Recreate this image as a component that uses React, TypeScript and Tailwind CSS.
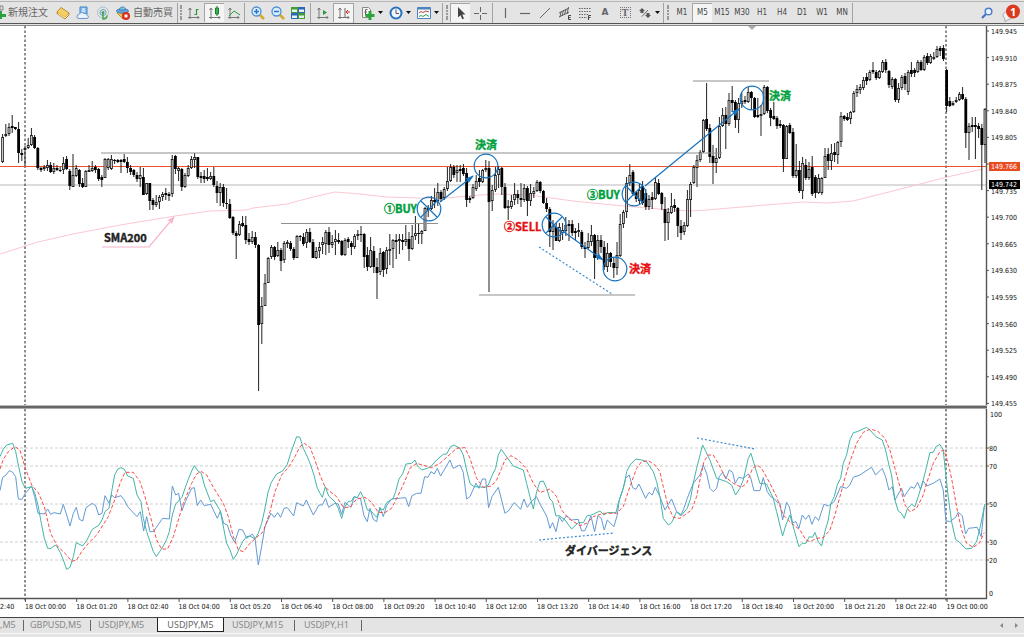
import type { ReactNode } from 'react'

// One entry per five-minute bar: direction, then high, body top, body bottom, low as chart y values
const BARS = `
u134,137,162,163 u124,134,136,137 u123,127,134,136 d115,126,128,133 d127,127,129,130 d122,129,153,163 d149,153,155,161 u146,148,150,166
u138,145,148,149 u128,135,145,146 d135,137,148,149 d147,148,168,170 d167,168,170,172 u165,167,169,171 u160,165,168,171 d162,165,172,173
u163,168,172,174 d165,168,170,171 d167,170,171,172 u157,163,170,174 d156,159,169,170 d169,171,186,190 u154,175,187,187 u165,168,176,177
d169,170,184,187 d178,183,187,188 u170,171,187,187 u165,170,172,172 u161,168,171,172 d165,167,170,173 d168,169,179,181 d175,177,180,187
u158,159,178,178 u158,159,168,170 u155,159,169,170 d159,160,161,164 d159,160,162,163 d159,160,162,173 d154,159,162,163 d157,162,168,173
d165,168,172,175 d169,170,175,177 d172,175,179,182 u167,175,179,187 d168,177,195,195 u183,183,194,195 d183,183,201,210 d198,200,205,210
u195,202,205,207 u195,197,202,209 u192,194,197,201 d188,193,195,200 d192,194,196,201 u155,159,194,197 d155,156,169,174 u167,168,171,181
d168,169,187,191 u173,175,187,188 u165,168,176,177 u156,159,168,169 u153,157,160,168 d157,157,177,179 d172,176,178,183 d170,176,179,183
d168,177,179,181 u172,176,179,180 d167,176,185,187 d181,186,193,203 u183,187,193,206 d184,187,203,207 d188,203,204,209 d199,204,218,219
d216,217,233,235 d231,233,236,259 u221,224,235,236 d216,223,226,227 d216,225,240,244 d233,239,242,245 u231,237,242,244 d232,237,245,248
d244,245,325,391 u297,306,324,344 u274,283,306,306 u257,258,283,283 u245,247,257,259 d246,247,257,260 u242,250,256,257 d248,250,261,271
u241,243,260,263 u240,242,244,248 d241,243,249,251 d247,249,258,260 u235,236,258,258 d235,236,237,241 d233,237,244,246 u229,232,243,248
d228,232,242,243 d239,242,258,258 u247,251,258,259 u242,247,251,258 u237,242,245,254 u230,232,244,255 d227,232,245,253 u235,242,245,248
u230,239,242,255 d233,240,242,244 d240,241,255,256 u238,240,255,256 d237,239,242,248 d241,243,247,255 u234,236,247,249 u230,234,236,240
d226,234,235,242 d233,234,257,268 d247,255,267,271 u237,250,267,268 d246,251,267,273 d258,267,273,299 u248,253,272,275 d251,252,270,277
u247,250,269,274 u234,249,251,265 u239,240,249,268 d234,240,242,259 u234,239,241,254 d234,240,242,250 u225,239,242,246 d232,239,249,261
u225,236,249,250 u216,233,236,240 d224,233,234,244 u230,231,234,244 u207,208,231,231 d205,208,210,217 u196,200,209,210 d188,200,202,208
u183,192,201,206 d190,192,199,202 u187,189,198,200 u167,181,189,191 u164,167,181,182 d165,167,175,178 u165,170,173,182 d165,169,171,182
d164,168,174,176 d168,173,200,207 d196,198,200,203 u184,187,198,199 u175,181,189,191 d170,178,182,187 u169,170,182,183 u160,168,170,172
d161,168,202,292 u185,190,201,211 u167,175,190,192 u166,169,175,188 d167,168,187,195 d183,187,208,209 u200,206,208,220 u195,201,207,209
u183,194,200,205 d190,194,198,204 d183,198,200,207 u184,188,200,202 d186,188,201,216 u184,193,201,206 u187,191,194,198 u180,182,191,192
d181,182,191,193 d190,191,203,204 d198,203,209,212 d207,209,232,247 u220,226,232,250 d223,227,241,241 u223,227,241,242 u223,230,233,240
u217,225,231,236 d220,224,226,241 d220,224,233,236 d228,231,233,240 u223,230,232,237 d230,232,247,249 d242,247,249,258 u233,241,248,249
u225,235,242,246 d234,235,258,279 u235,240,258,260 d235,240,247,253 d241,247,267,270 u243,253,267,272 d252,253,262,267 d257,263,268,278
u242,255,268,275 u214,224,256,257 u210,212,224,228 u177,183,212,218 u164,175,183,186 d170,172,194,196 d191,192,199,202 u184,190,201,204
d181,186,203,205 d189,193,207,210 u195,199,207,210 d192,197,200,209 u178,182,199,200 d179,183,194,195 d192,193,204,210 d197,209,223,241
u208,212,223,240 u193,206,213,214 d199,205,208,212 d207,208,226,237 d220,226,233,240 u222,225,232,235 u190,199,226,227 u182,184,200,217
u165,167,183,184 u155,160,168,187 u150,152,160,162 u119,120,152,153 d83,119,129,131 d124,128,157,163 d145,156,163,184 u148,158,163,173
u117,126,158,159 u108,115,126,127 d107,115,124,149 u93,100,124,126 d86,100,103,112 d100,102,120,128 u98,103,120,133 u92,101,104,108
d96,100,102,104 u87,92,102,103 d91,92,98,110 d97,98,117,118 d98,115,117,118 u105,114,116,136 u85,87,114,115 d86,87,111,113
d108,110,118,126 d102,116,119,120 d116,118,126,129 d120,124,126,128 d124,125,159,172 u125,126,159,159 d123,125,133,134 d128,132,176,178
u144,170,176,178 d161,170,191,193 u157,163,191,199 d159,165,178,180 u162,169,178,180 d156,167,194,196 d175,177,193,198 u174,178,193,194
u177,178,193,195 u148,156,178,178 d148,154,161,170 u144,153,161,170 d143,152,155,162 u141,142,155,164 u112,116,142,147 d115,116,119,121
d113,117,120,121 u111,112,119,124 u91,93,112,113 u85,89,93,97 u84,87,90,94 u77,80,88,90 d73,77,81,85 u70,72,80,81
d62,70,72,74 d70,72,78,80 u70,71,78,79 u60,62,72,73 d59,62,70,73 d70,71,85,88 u77,79,87,89 d78,79,100,102
u83,88,100,103 u75,77,88,90 d73,76,84,90 u70,72,92,95 d62,70,74,77 d68,70,73,77 u60,62,72,73 d60,62,70,71
u55,57,70,71 d53,56,63,65 u54,56,63,64 u52,57,59,60 u46,49,57,58 d46,48,51,56 d45,48,59,61 d69,70,106,112
d97,101,106,107 u101,103,105,106 u97,100,102,103 u92,94,100,101 d87,94,99,100 d97,99,133,148 u123,126,133,160 d117,125,127,132
d117,125,127,159 d123,126,129,138 d124,128,145,190 u108,109,145,163
`
  .trim()
  .split(/\s+/)
  .map(bar => {
    const [high, top, bottom, low] = bar.slice(1).split(',').map(Number)
    return { up: bar[0] === 'u', high, top, bottom, low }
  })

const SMA =
  '0,254 38,242 73,234 120,225 175,216 210,211 246,210 253,208 287,204 313,197 335,192 360,194 387,197 417,198 447,198 480,195 497,194 530,195 573,201 623,206 660,209 690,211 707,210 753,206 803,202 827,203 853,201 893,191 947,177 983,169'

// Oscillator lines, three units to the pixel, y from the 400 line
const STOCH_MAIN =
  '0,170 10,147 20,135 38,130 47,155 56,200 66,245 76,265 95,260 104,278 114,315 124,370 133,415 143,445 153,445 165,436 171,440 181,458 190,480 200,508 210,502 220,470 229,428 248,438 260,422 277,388 296,376 306,360 315,335 327,325 335,275 344,225 354,207 363,203 373,208 383,228 400,235 411,285 423,305 430,355 440,395 450,425 460,455 469,470 479,455 490,438 500,418 508,395 517,345 527,312 546,292 556,262 565,238 575,213 583,197 594,213 604,220 613,255 632,305 642,300 652,318 661,332 671,385 680,430 690,450 700,478 709,465 728,425 740,410 750,408 765,417 775,400 785,370 794,330 804,278 814,247 830,222 848,213 862,193 872,160 890,110 900,112 910,145 922,170 932,195 942,225 952,265 967,292 976,260 986,288 1005,305 1015,325 1025,355 1035,320 1045,305 1055,303 1062,290 1072,293 1082,275 1092,297 1102,330 1112,332 1130,352 1140,325 1150,330 1160,308 1180,295 1187,275 1197,237 1208,222 1218,192 1235,190 1245,180 1253,198 1265,210 1282,205 1292,200 1310,180 1330,163 1340,162 1352,140 1362,135 1380,145 1390,165 1400,210 1410,250 1422,260 1455,262 1465,255 1477,225 1487,205 1495,165 1504,148 1540,198 1570,210 1580,250 1590,290 1600,327 1610,275 1620,245 1630,243 1640,265 1650,297 1658,305 1668,348 1678,347 1695,360 1715,387 1735,368 1750,368 1762,347 1775,345 1800,333 1812,345 1822,338 1848,338 1855,310 1865,280 1875,245 1880,215 1890,195 1908,177 1925,180 1940,185 1960,215 1970,245 1980,290 1990,355 2005,375 2015,368 2030,335 2045,345 2062,325 2072,295 2080,250 2090,205 2108,135 2118,155 2130,180 2150,235 2180,245 2195,255 2207,285 2220,265 2230,240 2245,175 2253,160 2262,190 2280,250 2300,252 2320,295 2330,335 2348,408 2358,375 2370,345 2380,380 2397,440 2407,430 2418,430 2428,410 2438,412 2445,397 2455,425 2465,438 2475,395 2485,360 2493,310 2503,290 2512,255 2522,235 2530,190 2540,165 2550,120 2560,98 2572,95 2600,82 2610,90 2628,110 2647,120 2657,150 2667,195 2675,225 2685,300 2695,333 2705,340 2713,355 2723,325 2735,313 2745,320 2755,290 2770,240 2780,200 2790,158 2800,157 2808,140 2820,133 2830,150 2836,210 2845,290 2855,365 2867,418 2880,428 2898,447 2915,445 2930,425 2940,385 2955,312'
const STOCH_SIGNAL =
  '0,207 10,178 25,155 45,140 60,150 76,205 95,255 115,278 133,320 152,400 171,437 200,465 215,484 230,480 245,455 265,430 290,405 325,350 344,300 360,250 375,217 400,217 420,245 435,290 450,345 470,420 485,447 503,447 520,410 535,360 550,310 575,250 590,222 603,214 620,225 640,262 670,310 685,350 700,410 715,450 730,455 750,430 770,412 790,395 810,335 825,275 845,225 865,203 885,170 900,140 913,130 930,142 945,180 960,225 975,260 990,275 1010,290 1030,322 1050,322 1070,297 1095,292 1115,307 1135,337 1155,338 1175,325 1195,285 1215,243 1230,205 1250,190 1295,203 1320,190 1350,163 1370,145 1395,143 1410,175 1430,235 1450,262 1475,258 1490,240 1505,205 1515,180 1533,167 1555,180 1580,207 1600,250 1620,278 1650,267 1670,290 1685,330 1705,355 1740,377 1760,370 1780,350 1810,340 1850,340 1870,320 1890,260 1910,205 1925,185 1945,182 1965,195 1980,215 1990,260 2005,320 2020,352 2040,355 2075,330 2090,290 2100,240 2112,185 2125,165 2140,165 2155,190 2175,230 2200,250 2225,262 2240,250 2258,205 2272,195 2285,205 2310,250 2330,290 2350,345 2375,370 2400,390 2418,420 2430,425 2450,415 2470,413 2490,390 2505,345 2520,290 2535,235 2550,185 2570,130 2590,97 2612,87 2635,95 2655,115 2670,150 2685,205 2700,260 2715,315 2730,335 2750,325 2770,285 2785,235 2800,190 2820,155 2832,150 2845,190 2855,235 2870,320 2885,390 2900,430 2920,442 2938,430 2953,398'
const RSI =
  '0,272 8,232 18,225 28,212 38,217 47,230 55,297 66,298 76,280 95,258 104,290 114,340 133,342 143,327 152,343 162,338 181,342 190,313 200,345 210,378 220,340 229,322 238,358 248,363 258,323 277,310 287,317 296,345 306,340 315,287 327,310 335,285 344,293 363,287 373,300 383,320 411,350 421,335 431,393 440,350 450,395 460,395 488,355 508,357 517,258 527,285 536,280 546,332 556,305 575,265 583,263 592,317 602,300 613,317 632,313 652,355 661,333 671,370 682,375 692,405 704,427 717,388 728,390 740,415 757,402 765,415 775,495 785,440 795,380 813,340 823,352 833,338 842,352 852,325 862,323 881,348 890,308 910,318 919,300 940,345 957,315 967,315 977,295 986,322 1005,310 1015,312 1025,343 1035,307 1053,322 1063,290 1082,297 1092,347 1102,365 1110,325 1120,358 1130,365 1140,322 1150,350 1160,317 1175,297 1217,293 1226,320 1236,287 1250,280 1263,280 1274,230 1284,232 1293,215 1303,222 1312,205 1322,228 1350,180 1360,205 1380,195 1390,217 1400,297 1410,290 1428,250 1437,265 1447,237 1457,237 1466,323 1476,290 1495,262 1505,300 1515,340 1525,333 1543,308 1562,328 1572,297 1582,322 1592,307 1610,290 1620,312 1640,348 1650,385 1658,368 1668,395 1678,350 1687,365 1700,347 1715,360 1735,358 1745,393 1755,392 1773,348 1784,395 1794,347 1804,355 1813,390 1822,360 1842,380 1852,345 1858,300 1870,265 1877,235 1888,225 1898,263 1908,268 1917,252 1937,295 1947,277 1957,285 1966,262 1980,290 1995,330 2015,297 2030,335 2042,348 2052,325 2062,295 2080,250 2100,225 2110,195 2120,220 2130,265 2140,275 2150,265 2158,230 2168,217 2178,237 2188,210 2198,217 2206,250 2216,232 2230,235 2245,222 2252,232 2262,272 2280,272 2290,233 2302,275 2312,290 2322,295 2332,307 2340,310 2348,360 2360,307 2368,320 2378,368 2388,365 2397,385 2407,345 2417,358 2427,345 2436,373 2446,350 2456,362 2472,313 2485,318 2503,305 2522,260 2540,265 2550,255 2560,232 2580,225 2598,213 2615,202 2627,225 2647,205 2657,230 2667,270 2677,260 2685,300 2705,265 2713,290 2733,260 2743,265 2753,247 2762,268 2770,243 2780,258 2800,250 2820,237 2830,270 2838,362 2850,365 2867,352 2875,337 2887,347 2897,402 2906,385 2932,382 2944,410 2953,320'

const PRICES = [
  '149.945', '149.910', '149.875', '149.840', '149.805', '149.770', '149.735', '149.700',
  '149.665', '149.630', '149.595', '149.560', '149.525', '149.490', '149.455',
]

const TIMES = [
  '18 Oct 00:00', '18 Oct 01:20', '18 Oct 02:40', '18 Oct 04:00', '18 Oct 05:20', '18 Oct 06:40', '18 Oct 08:00',
  '18 Oct 09:20', '18 Oct 10:40', '18 Oct 12:00', '18 Oct 13:20', '18 Oct 14:40', '18 Oct 16:00', '18 Oct 17:20',
  '18 Oct 18:40', '18 Oct 20:00', '18 Oct 21:20', '18 Oct 22:40', '19 Oct 00:00',
]

const LEVELS = [
  { value: 80, y: 448 },
  { value: 70, y: 466 },
  { value: 50, y: 504 },
  { value: 30, y: 542 },
  { value: 20, y: 560 },
]

const axisText = "font-['DejaVu_Sans_Condensed','DejaVu_Sans',sans-serif] text-[7px]"
const noteText = "font-['Noto_Sans_CJK_JP',sans-serif] text-[11px] font-bold"

function Candles() {
  return (
    <g>
      {BARS.map((bar, i) => {
        const x = 2.6 + i * 3.2
        const height = Math.max(bar.bottom - bar.top, 1)
        return (
          <g key={i}>
            <rect x={x - 0.5} y={bar.high} width={1} height={bar.low - bar.high} fill="#222" />
            <rect x={x - 1.4} y={bar.top} width={2.8} height={height} fill={bar.up ? '#222' : '#000'} />
            {bar.up && height > 2 && <rect x={x - 0.6} y={bar.top + 1} width={1.2} height={height - 2} fill="#c8c8c8" />}
          </g>
        )
      })}
    </g>
  )
}

interface MarkerProps {
  x: number
  y: number
  crossed?: boolean
}

function Marker({ x, y, crossed }: MarkerProps) {
  return (
    <g fill="none" stroke="#1673c0" strokeWidth={1.2}>
      <circle cx={x} cy={y} r={11.8} />
      {crossed && <path d={`M${x - 8} ${y - 8}l16 16M${x + 8} ${y - 8}l-16 16`} />}
    </g>
  )
}

function PriceChart() {
  return (
    <svg viewBox="0 26 1024 382" className="block w-full" role="img" aria-label="USDJPY M5">
      <defs>
        <marker id="blueArrow" viewBox="0 0 9 6" refX="8" refY="3" markerWidth="9" markerHeight="6" markerUnits="userSpaceOnUse" orient="auto">
          <path d="M0 0L9 3L0 6L1.500 3Z" fill="#1673c0" />
        </marker>
        <marker id="pinkArrow" viewBox="0 0 8 6" refX="7" refY="3" markerWidth="8" markerHeight="6" markerUnits="userSpaceOnUse" orient="auto">
          <path d="M0 0L8 3L0 6L1.500 3Z" fill="#f6b3cb" />
        </marker>
      </defs>

      <path d="M0 185H986" stroke="#d0d0d0" strokeWidth={1.4} />
      <polyline points={SMA} fill="none" stroke="#fbc8d1" strokeWidth={1} />
      <path d="M25 26V406M946 26V406" stroke="#444" strokeWidth={1.2} strokeDasharray="2.500 2" />
      <path d="M0 166.500H987" stroke="#f0512a" />
      <Candles />
      <path d="M101 153H722M281 223.500H438M479 295H635M693 81H769" stroke="#8f8f8f" strokeWidth={1.2} />
      <path d="M748 26h8l-4 4Z" fill="#aaa" />

      {/* trades */}
      <Marker x={429} y={209} crossed />
      <Marker x={486} y={166} />
      <Marker x={554} y={225} crossed />
      <Marker x={615} y={269} />
      <Marker x={634} y={194} crossed />
      <Marker x={752} y={98} />
      <g stroke="#1673c0" strokeWidth={1.2}>
        <path d="M440 202L473 176" markerEnd="url(#blueArrow)" />
        <path d="M564 232L603 260" markerEnd="url(#blueArrow)" />
        <path d="M645 186L739 109" markerEnd="url(#blueArrow)" />
      </g>
      <path d="M539 247L612 294" stroke="#3b8ad0" strokeWidth={1.2} strokeDasharray="2 2" />
      <path d="M102 247H149L174 217" fill="none" stroke="#f6b3cb" strokeWidth={1.2} markerEnd="url(#pinkArrow)" />
      <text x={104} y={242} className={noteText} fill="#222" stroke="#222" strokeWidth={0.4}>SMA200</text>
      <g className={noteText} fill="#00a040" stroke="#00a040" strokeWidth={0.4}>
        <text x={475} y={149}>決済</text>
        <text x={384} y={213}>①BUY</text>
        <text x={587} y={199}>③BUY</text>
        <text x={769} y={100}>決済</text>
      </g>
      <g className={noteText} fill="#e60f12" stroke="#e60f12" strokeWidth={0.4}>
        <text x={504} y={231}>②SELL</text>
        <text x={629} y={273}>決済</text>
      </g>

      {/* price scale */}
      <path d="M986.500 26V406" stroke="#555" strokeWidth={1.4} />
      {PRICES.map((price, i) => (
        <g key={price} className={axisText} fill="#111">
          <path d={`M987 ${31 + i * 26.6}h2`} stroke="#555" />
          <text x={991} y={34 + i * 26.6}>{price}</text>
        </g>
      ))}
      <rect x={989} y={162} width={31} height={9} fill="#ea4a1f" />
      <rect x={989} y={180} width={31} height={9} fill="#000" />
      <g className={axisText} fill="#fff">
        <text x={991} y={169}>149.766</text>
        <text x={991} y={187}>149.742</text>
      </g>
      <path d="M0 407H987" stroke="#666" strokeWidth={2} />
      <path d="M0 405.500H987" stroke="#bbb" />
    </svg>
  )
}

function OscillatorChart() {
  return (
    <svg viewBox="0 408 1024 209" className="block w-full" role="img" aria-label="Stochastic, RSI">
      <path d="M0 408.500H987" stroke="#aaa" />
      {LEVELS.map(level => (
        <g key={level.value}>
          <path d={`M0 ${level.y}H986`} stroke="#cfcfcf" strokeDasharray="3 2" />
          <path d={`M987 ${level.y}h2`} stroke="#555" />
          <text x={989} y={level.y + 3} className={axisText} fill="#111">{level.value}</text>
        </g>
      ))}
      <g className={axisText} fill="#111">
        <text x={990} y={417}>100</text>
        <text x={989} y={596}>0</text>
      </g>
      <path d="M25 409V602M946 409V602" stroke="#444" strokeWidth={1.2} strokeDasharray="2.500 2" />
      <g transform="translate(0 400) scale(0.3333)" fill="none" strokeWidth={3} strokeLinejoin="round">
        <polyline points={RSI} stroke="#6299d4" />
        <polyline points={STOCH_MAIN} stroke="#43b5a5" />
        <polyline points={STOCH_SIGNAL} stroke="#f84c47" strokeDasharray="11 6" />
      </g>
      <path d="M539 540L614 533M697 438L755 449" stroke="#3b8ad0" strokeWidth={1.2} strokeDasharray="2 2" />
      <text x={565} y={555} className={noteText} fill="#222" stroke="#222" strokeWidth={0.4}>ダイバージェンス</text>

      <path d="M0 598.500H987M986.500 409V599" stroke="#555" strokeWidth={1.4} />
      <g className={axisText} fill="#111">
        <text x={0} y={609}>2:40</text>
        {TIMES.map((time, i) => (
          <g key={time}>
            <path d={`M${25.5 + i * 51.2} 599v3`} stroke="#555" />
            <text x={25 + i * 51.2} y={609}>{time}</text>
          </g>
        ))}
      </g>
    </svg>
  )
}

const Separator = () => <div className="h-5 w-px shrink-0 bg-[#a2a2a2]" />

const Grip = () => (
  <div className="flex h-4 w-[2px] shrink-0 flex-col justify-between">
    {[0, 1, 2, 3, 4, 5].map(dot => (
      <span key={dot} className="h-[2px] w-[2px] bg-[#999]" />
    ))}
  </div>
)

interface ToolProps {
  label: string
  pressed?: boolean
  menu?: boolean
  children: ReactNode
}

function Tool({ label, pressed, menu, children }: ToolProps) {
  return (
    <button
      type="button"
      aria-label={label}
      aria-pressed={pressed}
      className={`flex h-[19px] shrink-0 items-center justify-center ${menu ? 'w-7 gap-[3px]' : 'w-5'} ${
        pressed ? 'border-t border-l border-[#a5a5a5] bg-[#f4f4f4]' : ''
      }`}
    >
      <svg viewBox="0 0 14 14" className="h-[14px] w-[14px] shrink-0" fill="none" stroke="#666">
        {children}
      </svg>
      {menu && (
        <svg viewBox="0 0 5 3" className="h-[3px] w-[5px] shrink-0">
          <path d="M0 0h5L2.500 3Z" fill="#111" />
        </svg>
      )}
    </button>
  )
}

const axes = <path d="M3 2v11M1 11.500h11M1.500 4L3 2l1.500 2M10.500 10l1.500 1.500-1.500 1.500" stroke="#777" />

function Toolbar() {
  return (
    <header className="flex h-[26px] flex-col bg-[#e4e4e4]">
      <div className="h-[2px] shrink-0 border-b border-[#b5b5b5]" />
      <div className="flex h-[21px] shrink-0 items-center overflow-hidden">
        <button type="button" className="flex w-[53px] shrink-0 items-center gap-[2px] pb-[2px] font-['Noto_Sans_CJK_JP',sans-serif] text-[10px] leading-4 whitespace-nowrap text-[#666]">
          <svg viewBox="0 0 6 14" className="h-[14px] w-[6px] shrink-0">
            <path d="M0 1h3v4H0Z" fill="#ddd" stroke="#888" />
            <path d="M0 6h2v3h4v3H2v2H0Z" fill="#2ba33c" />
          </svg>
          新規注文
        </button>
        <Tool label="気配値表示">
          <path d="M1 6L5 1.500l8 5.500v2l-4 4-8-5.500Z" fill="#e2a52c" stroke="#a8701b" strokeWidth=".8" />
          <path d="M1.500 6L5 2l7.500 5L9 10.800Z" fill="#f3cf63" stroke="none" />
          <path d="M2 7.500l7 4.500 3.500-3.500" stroke="#fbeeb8" />
        </Tool>
        <Tool label="VPS">
          <path d="M4 1h7v7H4Z" fill="#8cbdf0" stroke="#3e82cc" />
          <path d="M6 3h3M6 5h3" stroke="#fff" />
          <path d="M3 12.500a2 2 0 010-4 3 3 0 015-1 2.500 2.500 0 013 1.500 1.800 1.800 0 010 3.500Z" fill="#e8f1fb" stroke="#6a98c8" />
        </Tool>
        <Tool label="シグナル">
          <circle cx="7" cy="6.500" r="5.500" stroke="#a8bfd2" />
          <circle cx="7" cy="6.500" r="3" stroke="#6ba0c8" />
          <path d="M7 6.500v6.500c2.500 0 4-1.500 4-3.500" stroke="#43a84a" strokeWidth="1.500" />
          <circle cx="7" cy="6.500" r="1.500" fill="#43a84a" stroke="none" />
        </Tool>
        <Tool label="自動売買">
          <path d="M1 7l6 6 6-5-3-3H4Z" fill="#eec84d" stroke="#be922b" />
          <ellipse cx="6.500" cy="5" rx="6" ry="2.200" fill="#69aadf" stroke="#3b7fb8" />
          <path d="M3.500 4c0-4 6-4 6 0Z" fill="#8bc2ea" stroke="#3b7fb8" />
          <circle cx="10" cy="10" r="4" fill="#d92e1d" stroke="none" />
          <path d="M8.500 8.500h3v3h-3Z" fill="#fff" stroke="none" />
        </Tool>
        <span className="w-11 shrink-0 pb-[2px] font-['Noto_Sans_CJK_JP',sans-serif] text-[10px] leading-4 whitespace-nowrap text-[#666]">自動売買</span>
        <Separator />
        <div className="w-[2px] shrink-0" />
        <Grip />
        <div className="w-[2px] shrink-0" />
        <Tool label="バーチャート">
          {axes}
          <path d="M9.500 3v6M9.500 3.500h2M7.500 8.500h2" stroke="#2b9b3a" strokeWidth="1.200" />
        </Tool>
        <Tool label="ローソク足" pressed>
          {axes}
          <path d="M9 0v10" stroke="#16812a" />
          <path d="M7.500 2h3v6h-3Z" fill="#36b34a" stroke="#16812a" />
        </Tool>
        <Tool label="ラインチャート">
          {axes}
          <path d="M2 10l5-5 6 4" stroke="#2b9b3a" />
        </Tool>
        <Separator />
        <div className="w-[3px] shrink-0" />
        <Tool label="ズームイン">
          <path d="M8.500 8.500l4.500 4.500" stroke="#d9a729" strokeWidth="2.500" />
          <circle cx="5.500" cy="5.500" r="4.500" fill="#d9edfd" stroke="#4c92d4" strokeWidth="1.300" />
          <path d="M3 5.500h5M5.500 3v5" stroke="#2b77c5" strokeWidth="1.500" />
        </Tool>
        <Tool label="ズームアウト">
          <path d="M8.500 8.500l4.500 4.500" stroke="#d9a729" strokeWidth="2.500" />
          <circle cx="5.500" cy="5.500" r="4.500" fill="#d9edfd" stroke="#4c92d4" strokeWidth="1.300" />
          <path d="M3 5.500h5" stroke="#2b77c5" strokeWidth="1.500" />
        </Tool>
        <Tool label="ウィンドウの整列">
          <g stroke="none">
            <path d="M0 1h7v6H0ZM7 7h7v6H7Z" fill="#3f9f35" />
            <path d="M7 1h7v6H7ZM0 7h7v6H0Z" fill="#2c66b8" />
            <path d="M1 3.500h5V6H1ZM8 3.500h5V6H8ZM1 9.500h5V12H1ZM8 9.500h5V12H8Z" fill="#e9f3ee" />
          </g>
        </Tool>
        <div className="w-[2px] shrink-0" />
        <Separator />
        <div className="w-[2px] shrink-0" />
        <Tool label="自動スクロール">
          {axes}
          <path d="M7 4l4 2.500L7 9Z" fill="#2b9b3a" stroke="none" />
        </Tool>
        <Tool label="チャートシフト" pressed>
          {axes}
          <path d="M8 2v9" />
          <path d="M9 6h4M11 4L9 6l2 2" stroke="#cc3427" />
        </Tool>
        <Separator />
        <div className="w-[4px] shrink-0" />
        <Tool label="インディケータ" menu>
          <path d="M1.500 1.500h6l2 2v8h-8Z" fill="#f5f5f5" stroke="#888" />
          <path d="M6.500 3.500h-2v6M3.500 6h2.500" />
          <path d="M9 5v9M4.500 9.500h9" stroke="#2aa43b" strokeWidth="3" />
        </Tool>
        <Tool label="時間軸" menu>
          <circle cx="7" cy="7" r="5.500" fill="#f2f8fe" stroke="#2a71bd" strokeWidth="2" />
          <path d="M7 3.500V7.500h3" stroke="#555" />
        </Tool>
        <Tool label="定型チャート" menu>
          <path d="M.5 1.500h13v11H.5Z" fill="#f7fbff" stroke="#4c85bd" />
          <path d="M.5 2.500h13" stroke="#4c85bd" strokeWidth="2" />
          <path d="M2 7l2-1.500 2 1 3-1.500 3 1" stroke="#c8483b" />
          <path d="M2 10.500l2-1 2 1 3-2 3 2" stroke="#3da04b" />
        </Tool>
        <Separator />
        <div className="w-[3px] shrink-0" />
        <Grip />
        <div className="w-[2px] shrink-0" />
        <Tool label="カーソル" pressed>
          <path d="M4 1v10.500l2.500-2.300 1.800 4 1.700-.8-1.800-3.900h3.300Z" fill="#444" stroke="none" />
        </Tool>
        <Tool label="クロスヘア">
          <path d="M7.500 1v5M7.500 9v5M1 7.500h5M9 7.500h5" />
        </Tool>
        <div className="w-[2px] shrink-0" />
        <Separator />
        <div className="w-[2px] shrink-0" />
        <Tool label="垂直線">
          <path d="M7.500 2v10" strokeWidth="1.200" />
        </Tool>
        <Tool label="水平線">
          <path d="M2 7.500h10" strokeWidth="1.200" />
        </Tool>
        <Tool label="トレンドライン">
          <path d="M2 12L12 2" />
        </Tool>
        <Tool label="平行チャネル">
          <path d="M1 7l10-5M1 11l10-5M3 5.500L2 11M5.500 4l-1.500 6M8 3L6.500 9M10.500 1L9 8" stroke="#555" strokeWidth=".9" />
          <path d="M13 9.500h-2.500v4H13M10.500 11.500h2" stroke="#444" />
        </Tool>
        <Tool label="フィボナッチ">
          <path d="M1 2.500h12M1 5.500h12M1 8.500h9M1 11.500h8" strokeDasharray="1.500 1" />
          <path d="M13 9.500h-2.500V14M10.500 11.500h2" stroke="#444" />
        </Tool>
        <button type="button" className="h-[19px] w-5 shrink-0 font-['DejaVu_Sans',sans-serif] text-[9px] font-bold text-[#666]">A</button>
        <button type="button" aria-label="テキストラベル" className="flex h-[19px] w-5 shrink-0 items-center justify-center">
          <span className="flex h-[11px] w-[11px] items-center justify-center border border-dotted border-[#777] font-['Liberation_Serif',serif] text-[10px] leading-none font-bold text-[#666]">T</span>
        </button>
        <Tool label="矢印" menu>
          <path d="M4 2l3 3H5.500v2h-3V5H1ZM10 12l-3-3h1.500V7h3v2H13Z" fill="#555" stroke="none" />
          <path d="M4 10.500L10 4" />
        </Tool>
        <Separator />
        <div className="w-[3px] shrink-0" />
        <Grip />
        <div className="w-[3px] shrink-0" />
        {['M1', 'M5', 'M15', 'M30', 'H1', 'H4', 'D1', 'W1', 'MN'].map(frame => (
          <button
            key={frame}
            type="button"
            aria-pressed={frame === 'M5'}
            className={`h-[19px] w-5 shrink-0 font-['DejaVu_Sans_Condensed','DejaVu_Sans',sans-serif] text-[8px] text-[#444] ${
              frame === 'M5' ? 'border-t border-l border-[#a5a5a5] bg-[#f4f4f4]' : ''
            }`}
          >
            {frame}
          </button>
        ))}
        <Separator />
        <div className="ml-auto flex items-center gap-2 pr-[3px]">
          <button type="button" aria-label="検索">
            <svg viewBox="0 0 12 12" className="h-3 w-3" fill="none">
              <path d="M5 7L1 11" stroke="#3a6fc4" strokeWidth="2" />
              <circle cx="7.500" cy="4.500" r="3.300" fill="#eef4fd" stroke="#4a80d0" strokeWidth="1.500" />
            </svg>
          </button>
          <button type="button" aria-label="通知 1" className="relative h-[18px] w-5">
            <svg viewBox="0 0 20 18" className="h-[18px] w-5">
              <path d="M2 12a5 4 0 115 3.500L4 18v-3Z" fill="#f2f2f2" stroke="#aaa" />
              <circle cx="12" cy="7.500" r="7" fill="#dc3a20" />
            </svg>
            <span className="absolute top-[2px] left-[9px] font-['Open_Sans',sans-serif] text-[11px] leading-[11px] font-bold text-white">1</span>
          </button>
        </div>
      </div>
      <div className="h-px shrink-0 bg-[#555]" />
      <div className="h-px shrink-0 bg-[#e4e4e4]" />
      <div className="h-px shrink-0 bg-[#888]" />
    </header>
  )
}

function ChartTabs() {
  const tab = 'h-3 shrink-0 text-left whitespace-nowrap'
  const bar = <span className="h-[11px] w-px shrink-0 bg-[#666]" />
  return (
    <footer className="border-t border-[#444] bg-[#e4e4e4] font-['Noto_Sans',sans-serif] text-[9px] leading-3 text-[#888]">
      <div className="flex h-4 items-start border-b border-[#f8f8f8]">
        <nav className="flex h-[14px] items-center">
          <button type="button" className={`${tab} w-[23px]`}>,M5</button>
          {bar}
          <button type="button" className={`${tab} w-[66px] pl-[6px]`}>GBPUSD,M5</button>
          {bar}
          <button type="button" className={`${tab} w-[66px] pl-[7px]`}>USDJPY,M5</button>
          <button type="button" aria-current="page" className="h-[14px] w-[67px] shrink-0 border-x border-b border-[#222] bg-white leading-3 text-[#666]">USDJPY,M5</button>
          <button type="button" className={`${tab} w-[70px] pl-2`}>USDJPY,M15</button>
          {bar}
          <button type="button" className={`${tab} w-[66px] pl-[9px]`}>USDJPY,H1</button>
          {bar}
        </nav>
        <div className="ml-auto flex h-[14px] items-center gap-3 pr-[6px]">
          <button type="button" aria-label="前へ">
            <svg viewBox="0 0 3 5" className="h-[5px] w-[3px]"><path d="M3 0v5L0 2.500Z" fill="#888" /></svg>
          </button>
          <button type="button" aria-label="次へ">
            <svg viewBox="0 0 3 5" className="h-[5px] w-[3px]"><path d="M0 0v5l3-2.500Z" fill="#888" /></svg>
          </button>
        </div>
      </div>
      <div className="h-[3px]" />
    </footer>
  )
}

export default function App() {
  return (
    <div className="flex w-full flex-col bg-white">
      <Toolbar />
      <main>
        <PriceChart />
        <OscillatorChart />
      </main>
      <ChartTabs />
    </div>
  )
}
